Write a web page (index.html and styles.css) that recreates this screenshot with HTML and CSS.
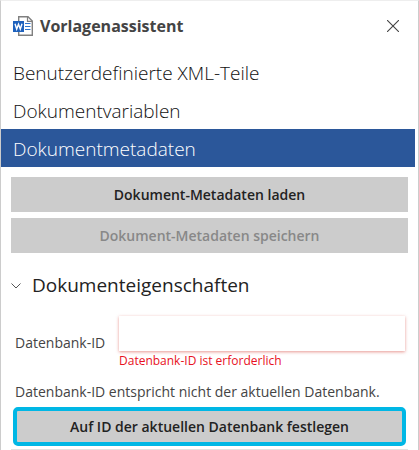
FILE: index.html
```html
<!doctype html>
<html lang="de">
    <head>
        <meta charset="utf-8">
        <title>Vorlagenassistent</title>
        <link rel="stylesheet" href="styles.css">
    </head>

    <body>
        <div class="pane">
            <div class="titlebar">
                <svg class="wordicon" width="20" height="20" viewBox="0 0 20 20">
                    <path d="M5.700 .7H15L19.300 5V19.300H5.700Z" fill="#fff" stroke="#808080" stroke-width="1.400"/>
                    <path d="M14.500 .7V5.300H19.300" fill="none" stroke="#808080" stroke-width="1.200"/>
                    <path d="M12 7.500H17.500M12 10.500H17.500M12 13.500H17.500" stroke="#2f75cc" stroke-width="1.200"/>
                    <rect x="0" y="5" width="11" height="11" fill="#1f62bd"/>
                    <path d="M2 7.700L3.700 13L5.500 8.200L7.300 13L9 7.700" fill="none" stroke="#fff" stroke-width="1.400"/>
                </svg>
                <h1>Vorlagenassistent</h1>
                <button class="close" type="button" aria-label="Schließen">
                    <svg width="12" height="12" viewBox="0 0 12 12">
                        <path d="M0 0L12 12M12 0L0 12" stroke="#444" stroke-width="1.100"/>
                    </svg>
                </button>
            </div>

            <nav class="sections">
                <a href="#xml">Benutzerdefinierte XML-Teile</a>
                <a href="#variablen">Dokumentvariablen</a>
                <a href="#metadaten" class="active">Dokumentmetadaten</a>
            </nav>

            <div class="content" id="metadaten">
                <button class="btn" type="button">Dokument-Metadaten laden</button>
                <button class="btn" type="button" disabled>Dokument-Metadaten speichern</button>

                <h2>
                    <svg width="10" height="6" viewBox="0 0 10 6">
                        <path d="M.5 .5L5 5L9.500 .5" fill="none" stroke="#555"/>
                    </svg>
                    Dokumenteigenschaften
                </h2>

                <div class="properties">
                    <div class="field">
                        <label for="dbid">Datenbank-ID</label>
                        <input type="text" id="dbid" required aria-describedby="dbid-error">
                        <div class="error" id="dbid-error">Datenbank-ID ist erforderlich</div>
                    </div>
                    <p>Datenbank-ID entspricht nicht der aktuellen Datenbank.</p>
                    <button class="btn focused" type="button">Auf ID der aktuellen Datenbank festlegen</button>
                </div>
            </div>
        </div>
    </body>

</html>
```
FILE: styles.css
```css
*{
    box-sizing: border-box;
}

body{
    margin: 0;
    background-color: white;
    color: #222;
    font-family: "Segoe UI", "Open Sans", "Noto Sans", sans-serif;
    font-size: 14px;
}

.pane{
    min-height: 100vh;
    border: 1px solid #ccc;
    border-top-color: #eee;
    border-bottom: none;
}

.titlebar{
    display: flex;
    align-items: center;
    height: 52px;
    padding: 0 19px 2px 12px;
}

.titlebar h1{
    flex: 1;
    margin: 0 0 0 7px;
    color: #444;
    font-size: 16px;
    font-weight: 700;
}

.close{
    display: flex;
    padding: 0;
    border: none;
    background: none;
}

.sections{
    margin-right: 3px;
}

.sections a{
    display: block;
    padding: 2px 0 0 12px;
    color: #111;
    font-size: 19px;
    font-weight: 300;
    line-height: 36px;
    text-decoration: none;
}

.sections a.active{
    background-color: #2b579a;
    color: white;
}

.content{
    padding: 10px 10px 0;
}

.btn{
    display: block;
    width: 100%;
    height: 35px;
    margin-bottom: 6px;
    padding: 0;
    border: none;
    background-color: #ccc;
    color: #222;
    font-family: inherit;
    font-size: 14px;
    font-weight: 600;
}

.btn:disabled{
    color: #888;
}

h2{
    display: flex;
    align-items: center;
    gap: 11px;
    margin: 20px 0 17px;
    font-size: 19px;
    font-weight: 400;
    line-height: 25px;
}

.properties{
    display: flex;
    flex-direction: column;
    padding-bottom: 3px;
    border-bottom: 1px solid #e1e1e1;
}

.field{
    display: grid;
    grid-template-columns: 104px 1fr;
    align-items: center;
    margin: 0 3px 0 4px;
    color: #444;
}

.field label{
    padding-top: 18px;
}

.field input{
    width: 100%;
    height: 35px;
    padding: 0 8px;
    border: none;
    box-shadow: 0 1px 3px rgba(210, 50, 40, 0.5);
    font: inherit;
}

.error{
    grid-column: 2;
    color: #e81123;
    font-size: 12px;
    line-height: 18px;
}

.properties p{
    margin: 12px 0 5px 4px;
    color: #444;
    line-height: 20px;
}

.focused{
    width: auto;
    height: 39px;
    margin: 0 2px;
    border: 4px solid #00b7e5;
    border-radius: 5px;
}
```
